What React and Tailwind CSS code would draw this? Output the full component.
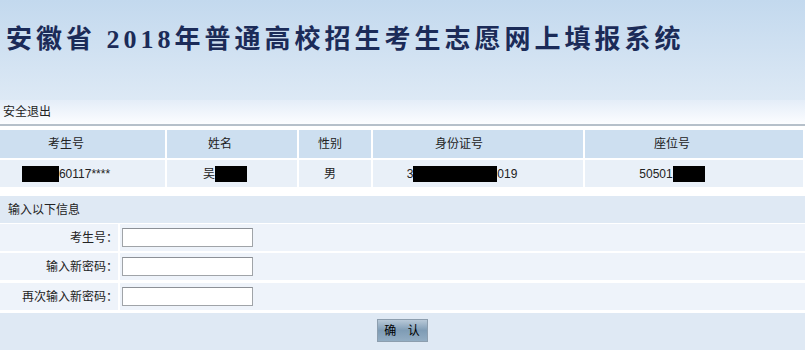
const cols = [
  { title: '考生号', cell: 'pr-[33px]' },
  { title: '姓名', cell: 'pr-[24px]' },
  { title: '性别', cell: 'pr-[10px]' },
  { title: '身份证号', cell: 'pr-[38px]' },
  { title: '座位号', cell: 'pr-[44px]' },
];

const Box = ({ w }) => <span className="inline-block h-[16px] bg-black" style={{ width: w }} />;

const App = () => {
  const font = { fontFamily: '"Liberation Sans", "Noto Sans CJK SC", sans-serif' };

  return (
    <div className="w-[805px] h-[350px] overflow-hidden bg-white text-[12px] text-[#222]" style={font}>
      {/* Banner */}
      <div className="h-[100px] bg-gradient-to-b from-[#c3d9ee] to-[#dde9f5] pl-[6px] pt-[27px]">
        <h1
          className="text-[26px] leading-none font-bold tracking-[4px] text-[#1b2b58]"
          style={{ fontFamily: '"Liberation Serif", "Noto Sans CJK SC", serif' }}
        >
          安徽省 2018年普通高校招生考生志愿网上填报系统
        </h1>
      </div>

      {/* Toolbar */}
      <div className="h-[24px] bg-gradient-to-b from-[#e4edf8] to-[#fcfdff] flex items-center pl-[3px]">
        安全退出
      </div>
      <div className="h-[2px] bg-[#b6c0ca]" />

      {/* Student info */}
      <div className="mt-[4px] grid grid-cols-[165px_130px_72px_210px_218px] gap-[2px]">
        {cols.map((c) => (
          <div key={c.title} className={`h-[28px] bg-[#cddff0] flex items-center justify-center ${c.cell}`}>
            {c.title}
          </div>
        ))}
        <div className="h-[27px] bg-[#e9f0f8] flex items-center justify-center pr-[33px]">
          <Box w={37} />
          <span>60117****</span>
        </div>
        <div className="h-[27px] bg-[#e9f0f8] flex items-center justify-center pr-[14px]">
          <span>吴</span>
          <Box w={32} />
        </div>
        <div className="h-[27px] bg-[#e9f0f8] flex items-center justify-center pr-[10px]">男</div>
        <div className="h-[27px] bg-[#e9f0f8] flex items-center justify-center pr-[32px]">
          <span>3</span>
          <Box w={84} />
          <span>019</span>
        </div>
        <div className="h-[27px] bg-[#e9f0f8] flex items-center justify-center pr-[44px]">
          <span>50501</span>
          <Box w={32} />
        </div>
      </div>

      {/* Password form */}
      <div className="mt-[9px] h-[27px] bg-[#dfe9f4] flex items-center pl-[8px]">输入以下信息</div>
      {['考生号：', '输入新密码：', '再次输入新密码：'].map((label, i) => (
        <div
          key={label}
          className={`h-[27px] grid grid-cols-[118px_1fr] gap-[2px] ${i === 0 ? 'mt-[1px]' : i === 1 ? 'mt-[2px]' : 'mt-[3px]'}`}
        >
          <div className="bg-[#eef3fa] flex items-center justify-end">{label}</div>
          <div className="bg-[#eef3fa] flex items-center pl-[2px]">
            <input
              type="text"
              className="w-[131px] h-[19px] bg-white border border-[#a0a4a8] border-t-[#8c9096] outline-none"
            />
          </div>
        </div>
      ))}
      <div className="mt-[3px] h-[40px] bg-[#dfe9f4] flex justify-center pt-[6px]">
        <button className="w-[51px] h-[23px] border border-[#8d9eae] bg-gradient-to-b from-[#b8c9d8] via-[#7f9cb5] to-[#93adc3] text-[12px] text-black tracking-[4px] pl-[3px] leading-none">
          确 认
        </button>
      </div>
    </div>
  );
};

export default App;
